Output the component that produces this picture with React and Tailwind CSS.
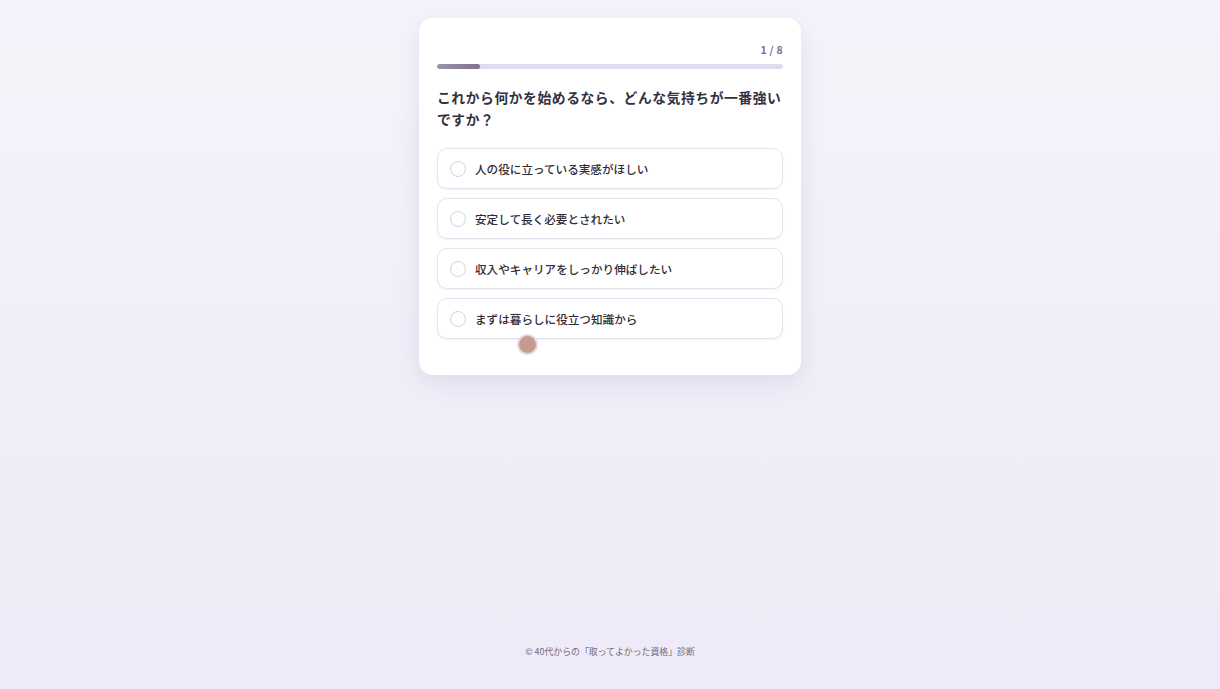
import React from "react";

const options = [
  "人の役に立っている実感がほしい",
  "安定して長く必要とされたい",
  "収入やキャリアをしっかり伸ばしたい",
  "まずは暮らしに役立つ知識から",
];

export default function App() {
  return (
    <div
      className="min-h-[689px] w-full bg-gradient-to-b from-[#f5f3fa] to-[#eeeaf7] flex flex-col items-center"
      style={{ fontFamily: '"Noto Sans CJK JP", "Noto Sans", sans-serif' }}
    >
      <div className="mt-[18px] w-[382px] rounded-[14px] bg-white px-[18px] pt-[24px] pb-[36px] shadow-[0_8px_24px_rgba(120,110,170,0.15)] relative">
        <div className="flex justify-end text-[10.5px] font-bold leading-[16px] text-[#7a6f96] tracking-wide">
          1 / 8
        </div>
        <div className="mt-[6px] h-[5px] w-full rounded-full bg-[#e2dbf0] overflow-hidden">
          <div className="h-full w-[12.5%] rounded-full bg-gradient-to-r from-[#9a91ab] to-[#7f7490]" />
        </div>
        <h1 className="mt-[17px] text-[13.8px] font-bold leading-[22px] text-[#35303f] tracking-[0.04em]">
          <span className="whitespace-nowrap">これから何かを始めるなら、どんな気持ちが一番強い</span>
          <br />
          ですか？
        </h1>
        <div className="mt-[18px] flex flex-col gap-[9px]">
          {options.map((o) => (
            <div
              key={o}
              className="flex h-[41px] items-center gap-[9px] rounded-[10px] border border-[#e6e3f0] bg-white px-[12px] shadow-[0_1px_2px_rgba(120,110,170,0.1)]"
            >
              <span className="h-[16px] w-[16px] rounded-full border-[1.5px] border-[#d4d0e2] bg-white" />
              <span className="text-[11.6px] font-medium leading-[18px] text-[#2f2b38]">{o}</span>
            </div>
          ))}
        </div>
        <div className="absolute left-[98px] top-[316px] h-[21px] w-[21px] rounded-full bg-[#c49b8c] border-[2px] border-[#e4d9e0]" />
      </div>
      <div className="mt-auto mb-[30px] text-[8.9px] leading-[14px] text-[#6f6a7c]">
        © 40代からの「取ってよかった資格」診断
      </div>
    </div>
  );
}
